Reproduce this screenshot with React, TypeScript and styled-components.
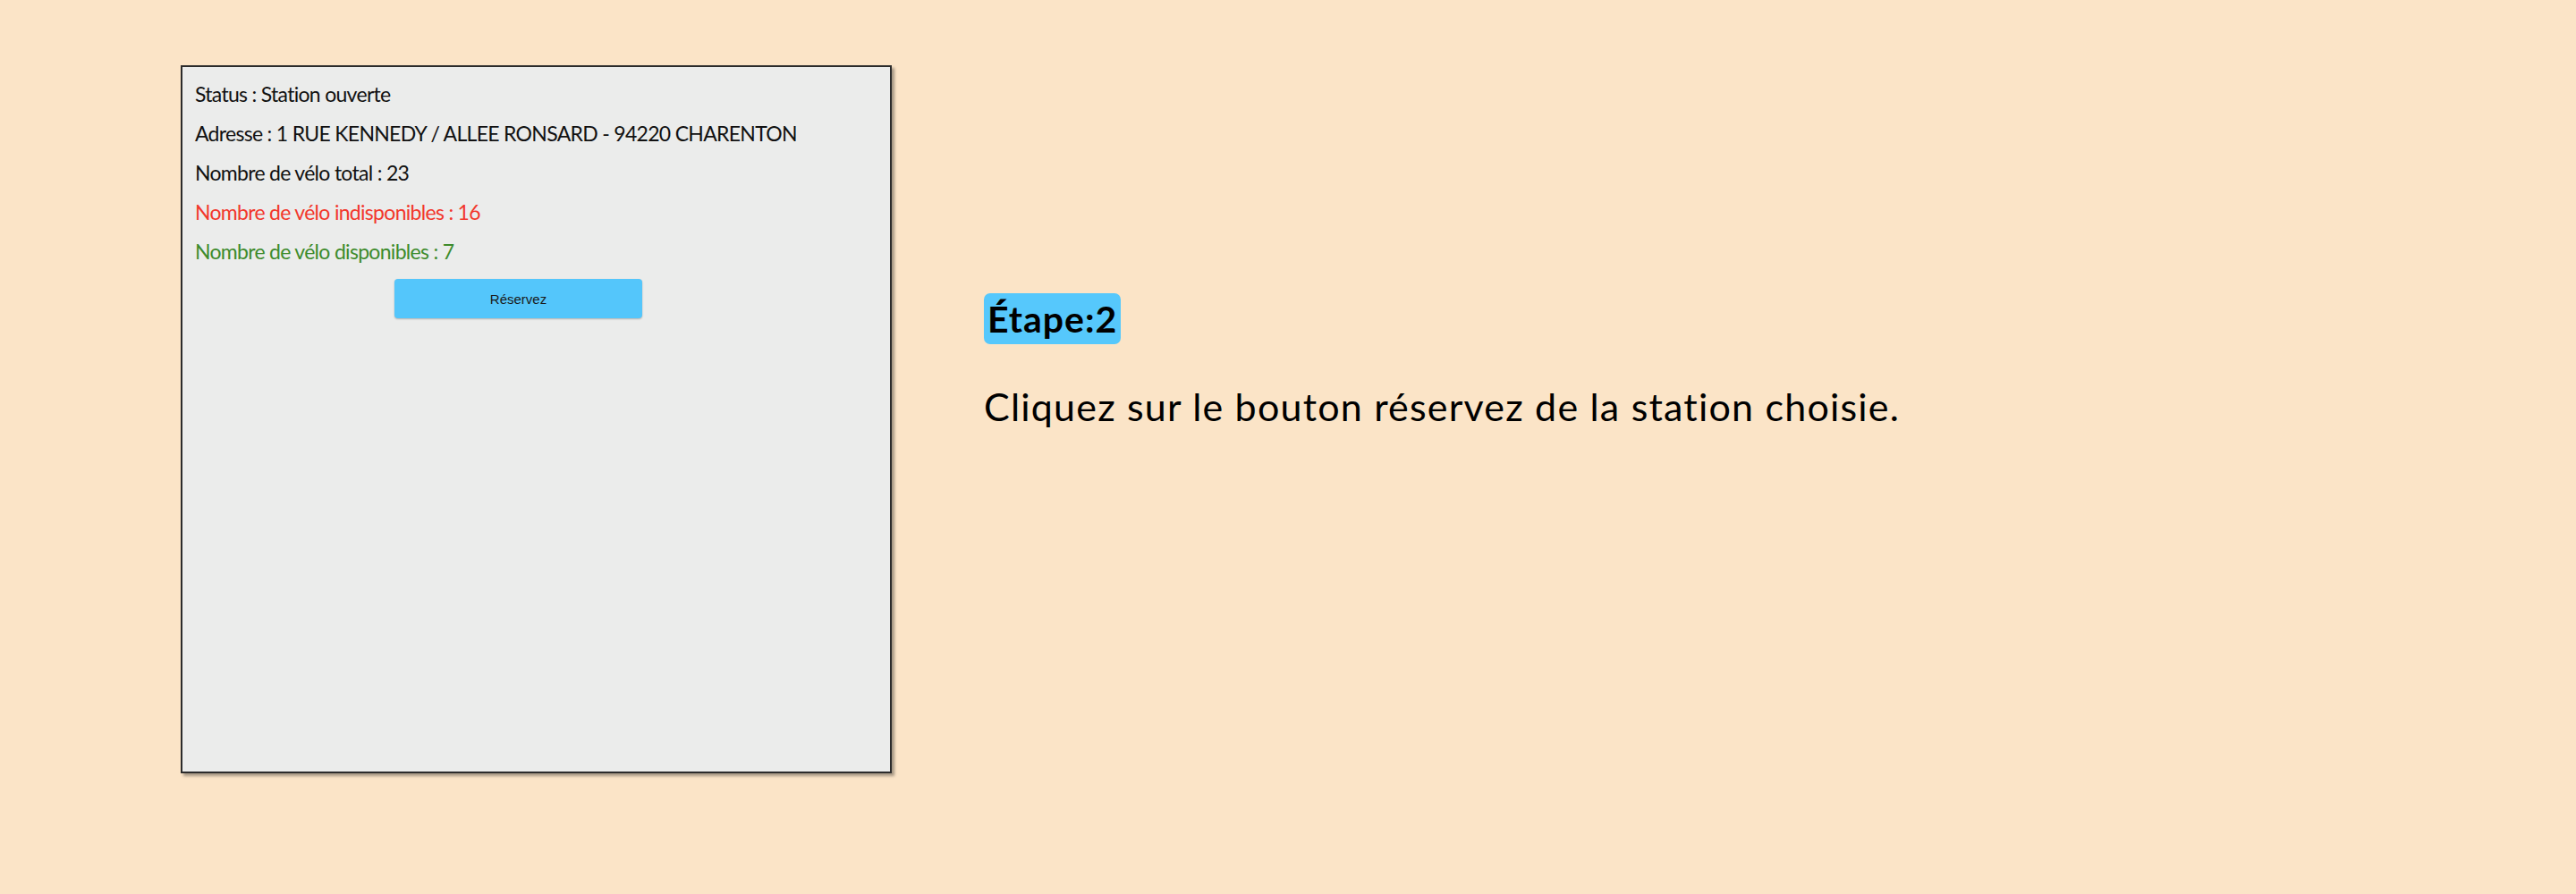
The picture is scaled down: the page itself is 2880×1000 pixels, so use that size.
import styled, { createGlobalStyle } from "styled-components";

const GlobalStyle = createGlobalStyle`
  html, body {
    margin: 0;
    padding: 0;
    background: #fbe4c7;
  }
  body {
    font-family: Lato, "Open Sans", sans-serif;
    color: #000;
  }
`;

const lines = [
  { text: "Status : Station ouverte", tone: "default" },
  { text: "Adresse : 1 RUE KENNEDY / ALLEE RONSARD - 94220 CHARENTON", tone: "default" },
  { text: "Nombre de vélo total : 23", tone: "default" },
  { text: "Nombre de vélo indisponibles : 16", tone: "danger" },
  { text: "Nombre de vélo disponibles : 7", tone: "success" },
];

function App() {
  return (
    <>
      <GlobalStyle />
      <StyledPage>
        <StationCard>
          {lines.map((item, index) => (
            <InfoLine key={index} $tone={item.tone}>
              {item.text}
            </InfoLine>
          ))}
          <ReserveButton type="button">Réservez</ReserveButton>
        </StationCard>
        <StepColumn>
          <StepTitle>Étape:2</StepTitle>
          <StepText>Cliquez sur le bouton réservez de la station choisie.</StepText>
        </StepColumn>
      </StyledPage>
    </>
  );
}
export default App;

const StyledPage = styled.div`
  display: flex;
  align-items: flex-start;
  gap: 103px;
  padding: 73px 0 0 202px;
  height: 1000px;
  box-sizing: border-box;
`;

const StationCard = styled.div`
  display: flex;
  flex-direction: column;
  align-items: flex-start;
  box-sizing: border-box;
  width: 795px;
  height: 792px;
  padding: 8px 14px;
  background: #ebeceb;
  border: 2px solid #2b2b2b;
  box-shadow: 3px 3px 3px rgba(0, 0, 0, 0.35);
`;

const toneColor: Record<string, string> = {
  default: "#111111",
  danger: "#f2372c",
  success: "#3d8b2c",
};

const InfoLine = styled.div<{ $tone: string }>`
  height: 44px;
  line-height: 44px;
  font-size: 23px;
  letter-spacing: -0.7px;
  white-space: nowrap;
  color: ${(p) => toneColor[p.$tone]};
`;

const ReserveButton = styled.button`
  margin: 9px 0 0 223px;
  width: 277px;
  height: 44px;
  border: none;
  border-radius: 4px;
  background: #54c6fb;
  box-shadow: 0 1px 2px rgba(0, 0, 0, 0.25);
  font-family: "Liberation Sans", Arial, sans-serif;
  font-size: 15px;
  color: #1a1a1a;
  cursor: pointer;
`;

const StepColumn = styled.div`
  display: flex;
  flex-direction: column;
  align-items: flex-start;
  padding-top: 255px;
`;

const StepTitle = styled.h2`
  margin: 0;
  padding: 0 4px;
  height: 57px;
  line-height: 57px;
  border-radius: 7px;
  background: #56c8fc;
  font-size: 41px;
  font-weight: 700;
  letter-spacing: 1px;
`;

const StepText = styled.p`
  margin: 46px 0 0;
  font-size: 43px;
  line-height: 48px;
  letter-spacing: 1.2px;
  white-space: nowrap;
`;
